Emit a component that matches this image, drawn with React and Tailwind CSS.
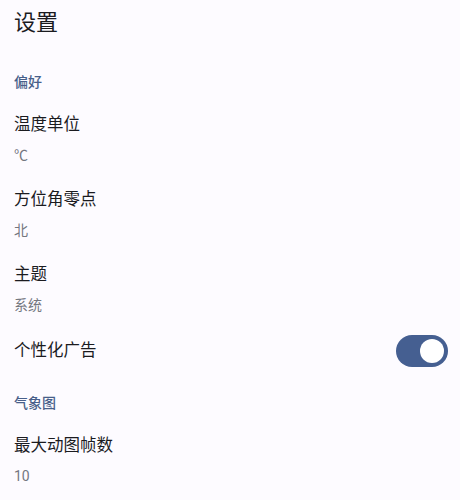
import React from "react";

const font = { fontFamily: '"Roboto", "Noto Sans CJK SC", sans-serif' };

function Item({ title, sub }) {
  return (
    <div className="px-[14px] pt-[12px] pb-[11px]">
      <div className="text-[16.5px] leading-[24px] text-[#1b1b1f]">{title}</div>
      <div className="text-[14px] leading-[20px] mt-[8px] text-[#74777f]">{sub}</div>
    </div>
  );
}

function Header({ children }) {
  return (
    <div className="px-[14px] pt-[11px] pb-[9px] text-[14px] leading-[20px] font-medium text-[#485f8a]">
      {children}
    </div>
  );
}

export default function App() {
  return (
    <div className="w-[460px] h-[500px] bg-[#fdfbff] overflow-hidden" style={font}>
      <div className="px-[14px] pt-[8px] pb-[23px] text-[22px] leading-[30px] text-[#1b1b1f]">设置</div>
      <Header>偏好</Header>
      <Item title="温度单位" sub="℃" />
      <Item title="方位角零点" sub="北" />
      <Item title="主题" sub="系统" />
      <div className="flex items-center justify-between pl-[14px] pr-[12px] pt-[9px] pb-[15px]">
        <div className="text-[16.5px] leading-[24px] text-[#1b1b1f]">个性化广告</div>
        <div className="w-[52px] h-[32px] rounded-full bg-[#455f91] flex items-center justify-end pr-[4px]">
          <div className="w-[24px] h-[24px] rounded-full bg-white" />
        </div>
      </div>
      <Header>气象图</Header>
      <Item title="最大动图帧数" sub="10" />
    </div>
  );
}
